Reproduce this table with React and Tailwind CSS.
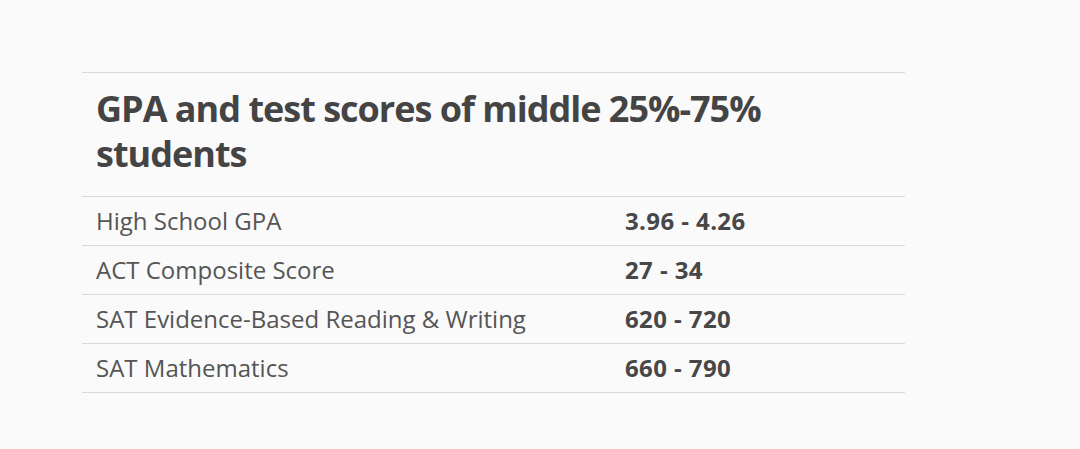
const rows = [
  { label: 'High School GPA', value: '3.96 - 4.26' },
  { label: 'ACT Composite Score', value: '27 - 34' },
  { label: 'SAT Evidence-Based Reading & Writing', value: '620 - 720' },
  { label: 'SAT Mathematics', value: '660 - 790' },
];

export default function App() {
  return (
    <div className="min-h-[449px] w-[1080px] bg-[#fafafa] pt-[72px] text-[#474747] font-['Open_Sans',sans-serif]">
      <div className="ml-[82px] w-[823px] border-t border-[#d9d9d9]">
        {/* Title */}
        <div className="h-[124px] border-b border-[#d9d9d9] pl-[14px] pt-[13px]">
          <h2 className="w-[720px] text-[36px] font-bold leading-[45px] tracking-[-1px] text-[#444]">
            GPA and test scores of middle 25%-75% students
          </h2>
        </div>
        {/* Rows */}
        {rows.map((row) => (
          <div key={row.label} className="flex h-[49px] items-center border-b border-[#d9d9d9] pl-[14px] text-[24px]">
            <div className="w-[529px] text-[#555]">{row.label}</div>
            <div className="font-bold tracking-[0.4px]">{row.value}</div>
          </div>
        ))}
      </div>
    </div>
  );
}
